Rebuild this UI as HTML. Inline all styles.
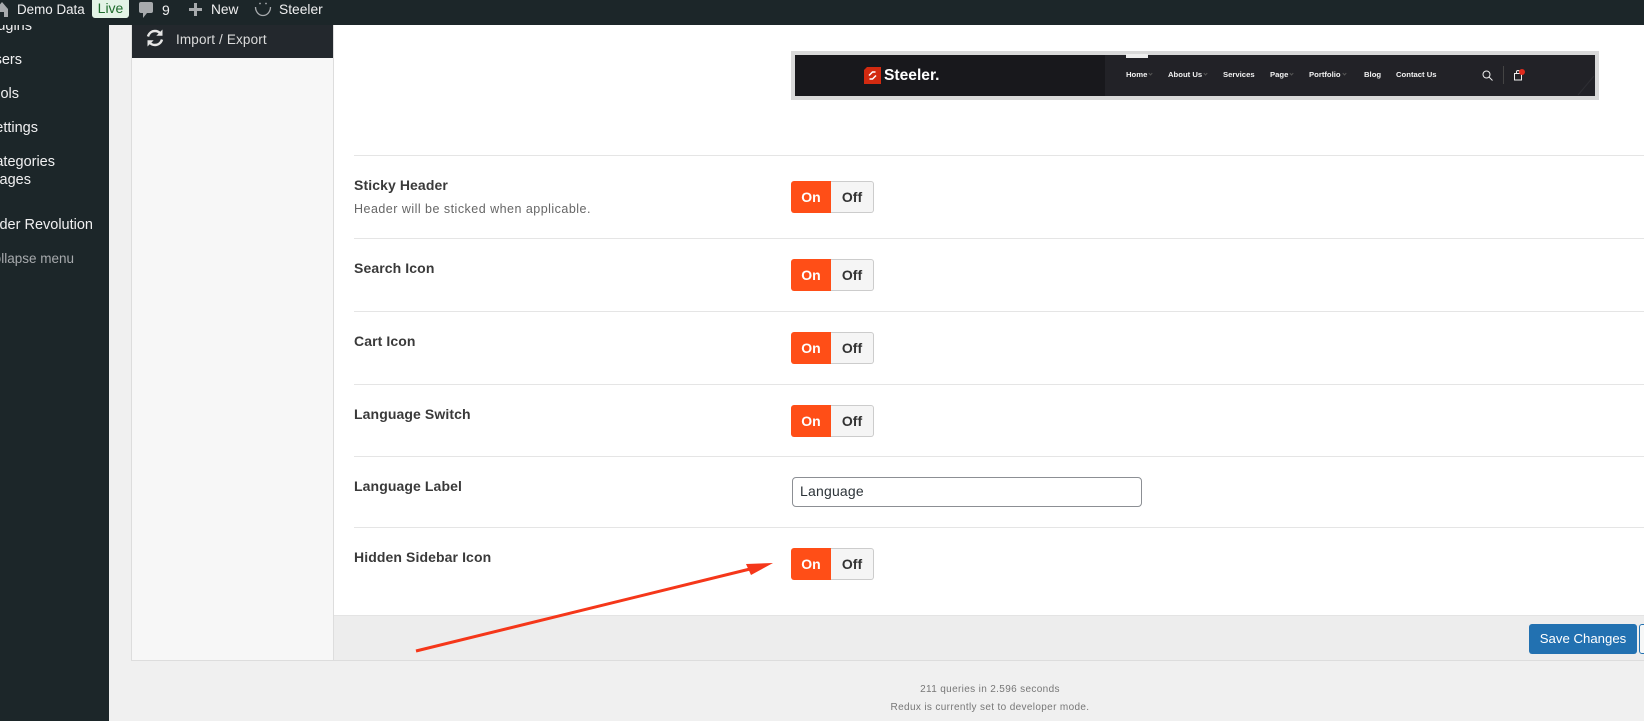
<!DOCTYPE html>
<html><head><meta charset="utf-8"><style>
html,body{margin:0;padding:0;width:1644px;height:721px;overflow:hidden;background:#f0f0f0;font-family:"Liberation Sans",sans-serif}
#p{position:relative;width:1644px;height:721px;overflow:hidden}
.a{position:absolute}
.t{position:absolute;white-space:nowrap;line-height:20px}
.bar{color:#f0f0f1;font-size:14px}
.side{color:#f0f0f1;font-size:14.5px;text-align:right;left:-100px}
.lab{left:354px;font-size:14px;font-weight:bold;color:#3a3a3a;letter-spacing:.1px}
.rule{position:absolute;left:354px;right:0;height:1px;background:#e5e5e5}
.on{position:absolute;left:791px;width:40px;height:32px;background:#ff4e17;border-radius:3px 0 0 3px;color:#fff;font-weight:bold;font-size:14px;line-height:32px;text-align:center}
.off{position:absolute;left:831px;width:42px;height:30px;background:#f5f5f5;border:1px solid #ccc;border-left:0;border-radius:0 3px 3px 0;color:#333;font-weight:bold;font-size:14px;line-height:30px;text-align:center}
.nav{position:absolute;top:70px;color:#f2f2f2;font-size:7.7px;font-weight:bold;line-height:10px;white-space:nowrap}
.c::after{content:"";display:inline-block;width:2px;height:2px;border-right:1px solid #555;border-bottom:1px solid #555;transform:rotate(45deg);margin-left:2px;vertical-align:2px}
.foot{position:absolute;left:790px;width:400px;text-align:center;color:#777;font-size:10px;line-height:14px;letter-spacing:.35px}
</style></head><body><div id="p">

<!-- content -->
<div class="a" style="left:334px;top:25px;width:1310px;height:590px;background:#fff"></div>
<div class="a" style="left:131px;top:25px;width:203px;height:636px;background:#f7f7f7;border-left:1px solid #ddd;box-sizing:border-box;border-right:1px solid #ddd"></div>
<div class="a" style="left:132px;top:25px;width:201px;height:33px;background:#23282d"></div>
<svg class="a" style="left:145px;top:28px" width="20" height="20" viewBox="0 0 20 20" fill="none" stroke="#e6e6e6" stroke-width="2.4">
<path d="M3 8.500C4 5 6.800 3 10 3c2.200 0 4 .9 5.300 2.400"/><path d="M17.500 1.500v6.200h-6.200z" fill="#e6e6e6" stroke="none"/>
<path d="M17 11.500C16 15 13.200 17 10 17c-2.200 0-4-.9-5.300-2.400"/><path d="M2.500 18.500v-6.200h6.200z" fill="#e6e6e6" stroke="none"/></svg>
<div class="t" style="left:176px;top:30px;font-size:13.500px;color:#dcdcdc;letter-spacing:.15px">Import / Export</div>

<!-- preview -->
<div class="a" style="left:791px;top:51px;width:808px;height:49px;box-sizing:border-box;border:4px solid #d9d9d9;background:#222227"></div>
<div class="a" style="left:795px;top:55px;width:310px;height:41px;background:#18181c"></div>
<div class="a" style="left:1126px;top:54px;width:22px;height:4px;background:#eee"></div>
<svg class="a" style="left:864px;top:67px" width="17" height="17" viewBox="0 0 17 17"><path d="M3 0h14v17H0V3z" fill="#d22a10"/><path d="M5 8.500l3.500-3.500h3M12 8.500l-3.500 3.500h-3" stroke="#fff" stroke-width="1.500" fill="none"/></svg>
<div class="t" style="left:884px;top:66px;font-size:15.600px;font-weight:bold;color:#fff">Steeler.</div>
<svg class="a" style="left:1570px;top:70px" width="25" height="26" fill="none" stroke="#2e2e33"><path d="M8 25L24 6"/></svg>
<div class="nav c" style="left:1126px">Home</div>
<div class="nav c" style="left:1168px">About Us</div>
<div class="nav" style="left:1223px">Services</div>
<div class="nav c" style="left:1270px">Page</div>
<div class="nav c" style="left:1309px">Portfolio</div>
<div class="nav" style="left:1364px">Blog</div>
<div class="nav" style="left:1396px">Contact Us</div>
<svg class="a" style="left:1482px;top:70px" width="11" height="11" viewBox="0 0 11 11" fill="none" stroke="#eee" stroke-width="1"><circle cx="4.500" cy="4.500" r="3.500"/><path d="M7 7l3.500 3.500"/></svg>
<div class="a" style="left:1503px;top:66px;width:1px;height:18px;background:#444"></div>
<svg class="a" style="left:1512px;top:68px" width="14" height="14" viewBox="0 0 14 14" fill="none" stroke="#eee" stroke-width="1"><path d="M2.500 5.500h7v6.500h-7zM4.500 5.500V4a1.500 1.500 0 0 1 3 0v1.500"/></svg>
<div class="a" style="left:1519px;top:69px;width:6px;height:6px;border-radius:50%;background:#e02a1c"></div>

<!-- rows -->
<div class="rule" style="top:155px"></div>
<div class="t lab" style="top:175px">Sticky Header</div>
<div class="t" style="left:354px;top:199px;font-size:12.500px;color:#666;letter-spacing:.48px">Header will be sticked when applicable.</div>
<div class="on" style="top:181px">On</div><div class="off" style="top:181px">Off</div>
<div class="rule" style="top:238px"></div>
<div class="t lab" style="top:258px">Search Icon</div>
<div class="on" style="top:259px">On</div><div class="off" style="top:259px">Off</div>
<div class="rule" style="top:311px"></div>
<div class="t lab" style="top:331px">Cart Icon</div>
<div class="on" style="top:332px">On</div><div class="off" style="top:332px">Off</div>
<div class="rule" style="top:384px"></div>
<div class="t lab" style="top:404px">Language Switch</div>
<div class="on" style="top:405px">On</div><div class="off" style="top:405px">Off</div>
<div class="rule" style="top:456px"></div>
<div class="t lab" style="top:476px">Language Label</div>
<div class="a" style="left:792px;top:477px;width:350px;height:30px;box-sizing:border-box;border:1px solid #8c8f94;border-radius:4px;background:#fff"></div>
<div class="t" style="left:800px;top:481px;font-size:14px;color:#2c3338;letter-spacing:.2px">Language</div>
<div class="rule" style="top:527px"></div>
<div class="t lab" style="top:547px">Hidden Sidebar Icon</div>
<div class="on" style="top:548px">On</div><div class="off" style="top:548px">Off</div>

<!-- footer bar -->
<div class="a" style="left:334px;top:615px;width:1310px;height:46px;background:#ededed;border-top:1px solid #e4e4e4;border-bottom:1px solid #ddd;box-sizing:border-box"></div>
<div class="a" style="left:131px;top:660px;width:1513px;height:1px;background:#ddd"></div>
<div class="a" style="left:1529px;top:624px;width:108px;height:30px;background:#2271b1;border-radius:3px;color:#fff;font-size:13.200px;line-height:30px;text-align:center">Save Changes</div>
<div class="a" style="left:1639px;top:624px;width:12px;height:30px;box-sizing:border-box;background:#f6f7f7;border:1px solid #2271b1;border-radius:3px"></div>
<div class="foot" style="top:683px">211 queries in 2.596 seconds</div>
<div class="foot" style="top:701px">Redux is currently set to developer mode.</div>

<!-- arrow -->
<svg class="a" style="left:0;top:0" width="1644" height="721"><path d="M416 651L750 569" stroke="#f5371a" stroke-width="3"/><path d="M773 563L746 564L751 575z" fill="#f5371a"/></svg>

<!-- sidebar -->
<div class="a" style="left:0;top:0;width:109px;height:721px;background:#1c2629;overflow:hidden">
<div class="t side" style="width:132px;top:16px">Plugins</div>
<div class="t side" style="width:122px;top:50px">Users</div>
<div class="t side" style="width:119px;top:84px">Tools</div>
<div class="t side" style="width:138px;top:118px">Settings</div>
<div class="t side" style="width:155px;top:152px">Categories</div>
<div class="t side" style="width:131px;top:170px">Images</div>
<div class="t side" style="width:193px;top:215px">Slider Revolution</div>
<div class="t side" style="width:174px;top:249px;color:#a7aaad;font-size:13.500px">Collapse menu</div>
</div>

<!-- top bar -->
<div class="a" style="left:0;top:0;width:1644px;height:25px;background:#1c2629"></div>
<svg class="a" style="left:0;top:1px" width="9" height="17" viewBox="0 0 9 17" fill="#a7aaad"><path d="M-4 8L2 1l6 7v8H4v-5H0v5h-4z"/></svg>
<div class="t bar" style="left:17px;top:0;font-size:13.400px">Demo Data</div>
<div class="a" style="left:92px;top:0;width:37px;height:18px;background:#e3f3e6;border-radius:0 0 3px 3px;color:#1e6b2c;font-size:14px;line-height:17px;text-align:center">Live</div>
<svg class="a" style="left:138px;top:1px" width="16" height="17" viewBox="0 0 16 17" fill="#a7aaad"><path d="M3 1h10a2 2 0 0 1 2 2v7a2 2 0 0 1-2 2H9l-4 5v-5H3a2 2 0 0 1-2-2V3a2 2 0 0 1 2-2z"/></svg>
<div class="t bar" style="left:162px;top:0">9</div>
<svg class="a" style="left:189px;top:3px" width="13" height="13" viewBox="0 0 13 13" fill="#a7aaad"><path d="M5 0h3v5h5v3H8v5H5V8H0V5h5z"/></svg>
<div class="t bar" style="left:211px;top:0;font-size:13.700px">New</div>
<svg class="a" style="left:254px;top:1px" width="18" height="16" viewBox="0 0 18 16" fill="none" stroke="#a7aaad" stroke-width="1.300"><path d="M1.500 6a7.500 8.500 0 0 0 15 0"/><circle cx="6" cy="2.500" r=".9" fill="#a7aaad" stroke="none"/><circle cx="12" cy="2.500" r=".9" fill="#a7aaad" stroke="none"/></svg>
<div class="t bar" style="left:279px;top:0;font-size:13.800px">Steeler</div>

</div></body></html>
